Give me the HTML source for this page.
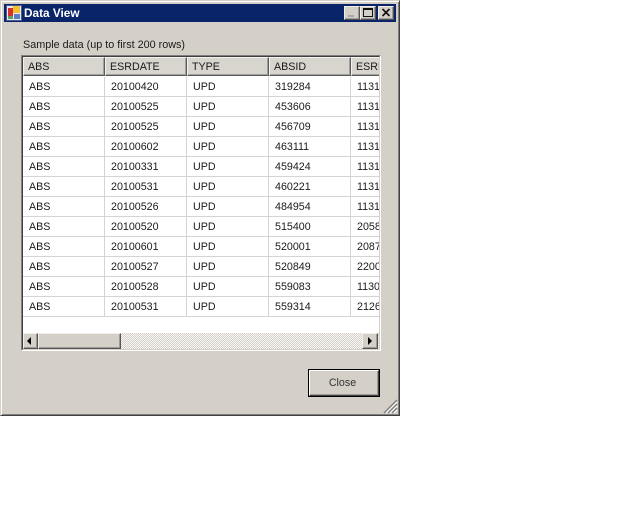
<!DOCTYPE html>
<html><head><meta charset="utf-8"><style>
html,body{margin:0;padding:0;background:#fff;width:640px;height:512px;overflow:hidden}
*{box-sizing:border-box}
div,span{position:absolute}
body,div,span{font-family:"Liberation Sans",sans-serif;font-size:10.7px;color:#1a1a1a;white-space:nowrap;line-height:13px}
.h{top:57px;height:19px;background:#d8d4ce;border:1px solid;border-color:#f4f2ee #5a5a5a #5a5a5a #f4f2ee;box-shadow:inset -1px -1px 0 #a0a0a0;padding:3px 0 0 4px}
.r{left:23px;width:356px;height:1px;background:#d4d4d4}
.v{top:77px;height:240px;width:1px;background:#d4d4d4}
.bt{background:#d4d0c8;border:1px solid;border-color:#f0eee8 #555 #555 #f0eee8;box-shadow:inset -1px -1px 0 #9a9a9a}
.col{top:77px;line-height:20px}
</style></head><body>
<div id="w" style="left:0;top:0;width:400px;height:416px;background:#d4d0c8;border:1px solid;border-color:#d4d0c8 #404040 #404040 #d4d0c8;box-shadow:inset 1px 1px 0 #fff,inset -1px -1px 0 #808080"></div>
<div style="left:4px;top:4px;width:392px;height:18px;background:#0a246a"></div>
<svg style="position:absolute;left:6px;top:5px" width="16" height="16" viewBox="0 0 16 16"><rect x="0.5" y="0.5" width="15" height="15" fill="#e8e8f0" stroke="#4a5a90"/><rect x="2" y="3" width="5" height="8" fill="#d83030"/><rect x="7" y="1" width="7" height="7" fill="#f0c030"/><rect x="8" y="9" width="6" height="5" fill="#5a80c0"/><rect x="2" y="11" width="5" height="3" fill="#60a060"/></svg>
<div style="left:24px;top:7px;color:#fff;font-weight:bold;font-size:11.8px">Data View</div>
<div class="bt" style="left:344px;top:6px;width:16px;height:14px"></div><div style="left:348px;top:15px;width:6px;height:2px;background:#a8a8a8"></div>
<div class="bt" style="left:360px;top:6px;width:16px;height:14px"></div><div style="left:363px;top:8px;width:10px;height:9px;border:1px solid #111;border-top-width:2px"></div>
<div class="bt" style="left:378px;top:6px;width:16px;height:14px"></div>
<svg style="position:absolute;left:381px;top:8px" width="10" height="10"><path d="M1.5 1L8.5 8M8.5 1L1.5 8" stroke="#111" stroke-width="1.6"/></svg>
<div style="left:23px;top:38px;font-size:10.8px;line-height:14px">Sample data (up to first 200 rows)</div>
<div style="left:21px;top:55px;width:360px;height:296px;border:1px solid;border-color:#808080 #fff #fff #808080"></div>
<div style="left:22px;top:56px;width:358px;height:294px;border:1px solid;border-color:#404040 #d4d0c8 #d4d0c8 #404040;background:#fff"></div>
<div style="left:23px;top:57px;width:356px;height:292px;overflow:hidden">
<div class="h" style="left:0;top:0;width:82px">ABS</div>
<div class="h" style="left:82px;top:0;width:82px">ESRDATE</div>
<div class="h" style="left:164px;top:0;width:82px">TYPE</div>
<div class="h" style="left:246px;top:0;width:82px">ABSID</div>
<div class="h" style="left:328px;top:0;width:82px">ESRN</div>
</div>
<div class="v" style="left:104px"></div><div class="v" style="left:186px"></div><div class="v" style="left:268px"></div><div class="v" style="left:350px"></div>
<div class="r" style="top:96px"></div><div class="r" style="top:116px"></div><div class="r" style="top:136px"></div><div class="r" style="top:156px"></div><div class="r" style="top:176px"></div><div class="r" style="top:196px"></div><div class="r" style="top:216px"></div><div class="r" style="top:236px"></div><div class="r" style="top:256px"></div><div class="r" style="top:276px"></div><div class="r" style="top:296px"></div><div class="r" style="top:316px"></div>
<div class="col" style="left:29px">ABS<br>ABS<br>ABS<br>ABS<br>ABS<br>ABS<br>ABS<br>ABS<br>ABS<br>ABS<br>ABS<br>ABS</div>
<div class="col" style="left:111px">20100420<br>20100525<br>20100525<br>20100602<br>20100331<br>20100531<br>20100526<br>20100520<br>20100601<br>20100527<br>20100528<br>20100531</div>
<div class="col" style="left:193px">UPD<br>UPD<br>UPD<br>UPD<br>UPD<br>UPD<br>UPD<br>UPD<br>UPD<br>UPD<br>UPD<br>UPD</div>
<div class="col" style="left:275px">319284<br>453606<br>456709<br>463111<br>459424<br>460221<br>484954<br>515400<br>520001<br>520849<br>559083<br>559314</div>
<div class="col" style="left:357px;width:22px;height:240px;overflow:hidden">1131<br>1131<br>1131<br>1131<br>1131<br>1131<br>1131<br>2058<br>2087<br>2200<br>1130<br>2126</div>
<div style="left:23px;top:333px;width:356px;height:16px;background-color:#e6e4df;background-image:repeating-conic-gradient(#d4d0c8 0 25%,#f8f8f6 0 50%);background-size:2px 2px"></div>
<div class="bt" style="left:23px;top:333px;width:15px;height:16px"></div>
<svg style="position:absolute;left:27px;top:337px" width="6" height="8"><path d="M4 0V8L0 4Z" fill="#000"/></svg>
<div class="bt" style="left:38px;top:333px;width:83px;height:16px"></div>
<div class="bt" style="left:362px;top:333px;width:16px;height:16px"></div>
<svg style="position:absolute;left:368px;top:337px" width="6" height="8"><path d="M0 0V8L4 4Z" fill="#000"/></svg>
<div style="left:308px;top:369px;width:72px;height:28px;border:1px solid #000"></div>
<div class="bt" style="left:309px;top:370px;width:70px;height:26px;border-color:#fff #404040 #404040 #fff;text-align:center;line-height:25px;padding-right:3px;color:#333">Close</div>
<svg style="position:absolute;left:382px;top:398px" width="16" height="16"><path d="M15 2L2 15M15 6L6 15M15 10L10 15" stroke="#808080" stroke-width="1.5"/><path d="M15 4L4 15M15 8L8 15M15 12L12 15" stroke="#fff" stroke-width="1"/></svg>
</body></html>
